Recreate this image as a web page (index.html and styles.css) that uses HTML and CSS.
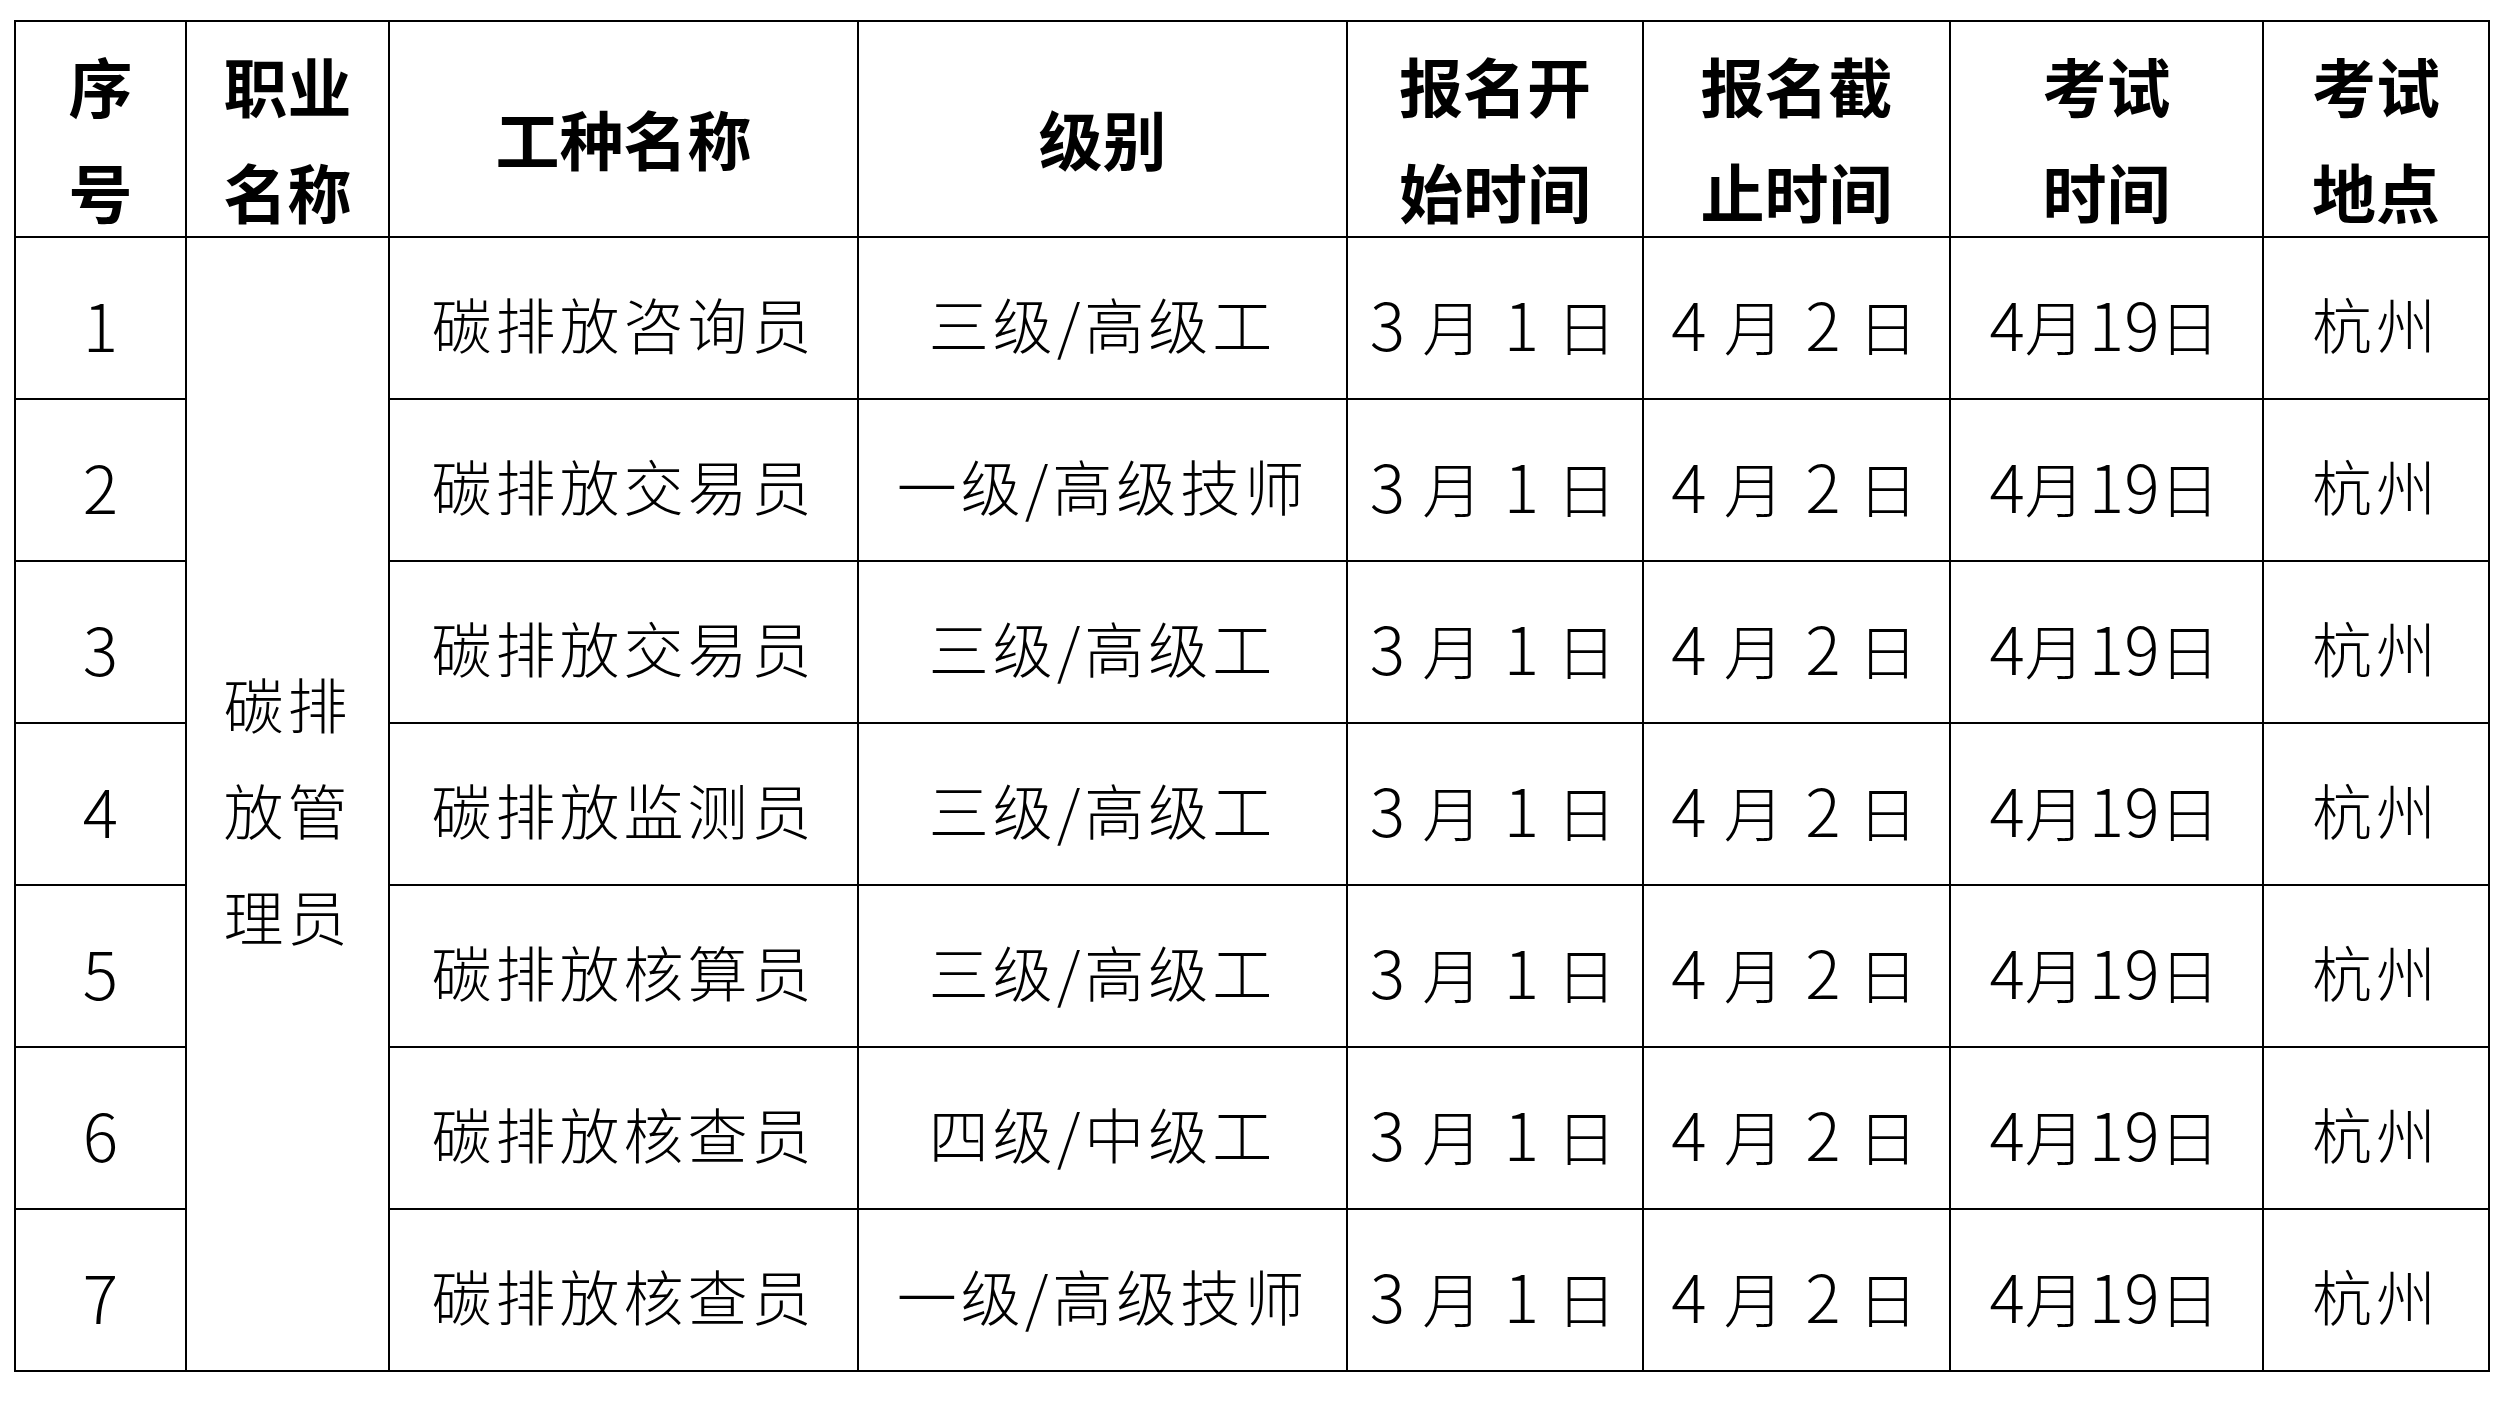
FILE: index.html
```html
<!DOCTYPE html>
<html lang="zh-CN">
<head>
<meta charset="utf-8">
<title>碳排放管理员 考试安排</title>
<link rel="stylesheet" href="styles.css">
</head>
<body>
<table class="sched">
  <colgroup>
    <col class="c1"><col class="c2"><col class="c3"><col class="c4"><col class="c5"><col class="c6"><col class="c7"><col class="c8">
  </colgroup>
  <thead>
    <tr class="head">
      <th><div class="hd">序<br>号</div></th>
      <th><div class="hd">职业<br>名称</div></th>
      <th><div class="hd">工种名称</div></th>
      <th><div class="hd">级别</div></th>
      <th><div class="hd">报名开<br>始时间</div></th>
      <th><div class="hd">报名截<br>止时间</div></th>
      <th><div class="hd">考试<br>时间</div></th>
      <th><div class="hd">考试<br>地点</div></th>
    </tr>
  </thead>
  <tbody>
    <tr>
      <td class="seq">1</td>
      <td class="job" rowspan="7">碳排<br>放管<br>理员</td>
      <td>碳排放咨询员</td>
      <td>三级/高级工</td>
      <td class="date"><span class="n">3</span> 月 <span class="n">1</span> 日</td>
      <td class="date"><span class="n">4</span> 月 <span class="n">2</span> 日</td>
      <td class="date"><span class="n">4</span>月<span class="n">19</span>日</td>
      <td>杭州</td>
    </tr>
    <tr>
      <td class="seq">2</td>
      <td>碳排放交易员</td>
      <td>一级/高级技师</td>
      <td class="date"><span class="n">3</span> 月 <span class="n">1</span> 日</td>
      <td class="date"><span class="n">4</span> 月 <span class="n">2</span> 日</td>
      <td class="date"><span class="n">4</span>月<span class="n">19</span>日</td>
      <td>杭州</td>
    </tr>
    <tr>
      <td class="seq">3</td>
      <td>碳排放交易员</td>
      <td>三级/高级工</td>
      <td class="date"><span class="n">3</span> 月 <span class="n">1</span> 日</td>
      <td class="date"><span class="n">4</span> 月 <span class="n">2</span> 日</td>
      <td class="date"><span class="n">4</span>月<span class="n">19</span>日</td>
      <td>杭州</td>
    </tr>
    <tr>
      <td class="seq">4</td>
      <td>碳排放监测员</td>
      <td>三级/高级工</td>
      <td class="date"><span class="n">3</span> 月 <span class="n">1</span> 日</td>
      <td class="date"><span class="n">4</span> 月 <span class="n">2</span> 日</td>
      <td class="date"><span class="n">4</span>月<span class="n">19</span>日</td>
      <td>杭州</td>
    </tr>
    <tr>
      <td class="seq">5</td>
      <td>碳排放核算员</td>
      <td>三级/高级工</td>
      <td class="date"><span class="n">3</span> 月 <span class="n">1</span> 日</td>
      <td class="date"><span class="n">4</span> 月 <span class="n">2</span> 日</td>
      <td class="date"><span class="n">4</span>月<span class="n">19</span>日</td>
      <td>杭州</td>
    </tr>
    <tr>
      <td class="seq">6</td>
      <td>碳排放核查员</td>
      <td>四级/中级工</td>
      <td class="date"><span class="n">3</span> 月 <span class="n">1</span> 日</td>
      <td class="date"><span class="n">4</span> 月 <span class="n">2</span> 日</td>
      <td class="date"><span class="n">4</span>月<span class="n">19</span>日</td>
      <td>杭州</td>
    </tr>
    <tr>
      <td class="seq">7</td>
      <td>碳排放核查员</td>
      <td>一级/高级技师</td>
      <td class="date"><span class="n">3</span> 月 <span class="n">1</span> 日</td>
      <td class="date"><span class="n">4</span> 月 <span class="n">2</span> 日</td>
      <td class="date"><span class="n">4</span>月<span class="n">19</span>日</td>
      <td>杭州</td>
    </tr>
  </tbody>
</table>
</body>
</html>
```

FILE: styles.css
```css
html, body {
  margin: 0;
  padding: 0;
  background: #ffffff;
}

body {
  padding: 20px 0 0 14px;
  font-family: "Noto Sans CJK SC", "Liberation Sans", sans-serif;
  color: #000000;
}

.sched {
  border-collapse: collapse;
  table-layout: fixed;
  width: 2474px;
}

.c1 { width: 171px; }
.c2 { width: 203px; }
.c3 { width: 469px; }
.c4 { width: 489px; }
.c5 { width: 296px; }
.c6 { width: 307px; }
.c7 { width: 313px; }
.c8 { width: 226px; }

.sched th,
.sched td {
  border: 2px solid #000000;
  text-align: center;
  vertical-align: middle;
}

.head th {
  height: 214px;
  padding: 0;
  font-size: 64px;
  font-weight: 700;
  line-height: 106px;
}

.hd {
  margin-top: 8px;
  margin-bottom: -8px;
}

.sched td {
  height: 150px;
  padding: 10px 0 0 0;
  font-size: 60px;
  font-weight: 300;
  line-height: 80px;
  letter-spacing: 4px;
  white-space: nowrap;
}

.sched td.seq {
  font-size: 66px;
  letter-spacing: 0;
}

.sched td.job {
  line-height: 106px;
}

.n {
  font-size: 66px;
  letter-spacing: 0;
}
```
